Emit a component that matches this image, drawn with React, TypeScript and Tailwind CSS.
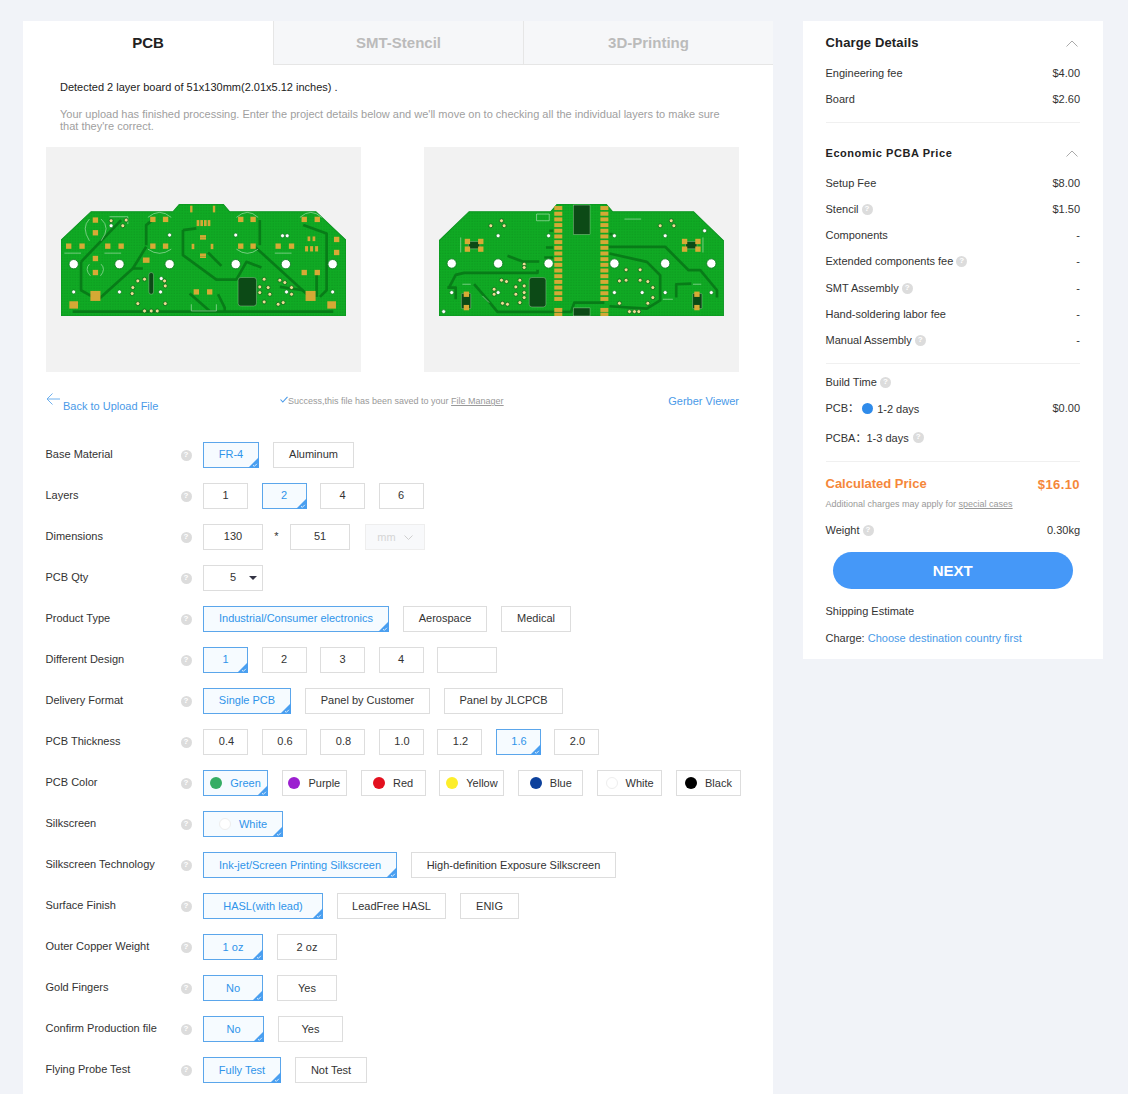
import React from "react";

type Opt = { t: string; w: string; on?: boolean; dot?: string; ring?: boolean };
type Row = { label: string; gap: string; lift?: boolean; opts: Opt[] };

const Help = ({ className = "" }: { className?: string }) => (
  <span className={"inline-flex h-[11px] w-[11px] shrink-0 items-center justify-center rounded-full bg-[#dcdcdc] text-[8px] font-bold leading-none text-white " + className}>?</span>
);

const Corner = () => (
  <svg className="absolute -bottom-px -right-px h-[11px] w-[11px]" viewBox="0 0 11 11">
    <path d="M11 0V11H0Z" fill="#4a9ff0" />
    <path d="M5 8.2l1.3 1.2 2.6-2.6" fill="none" stroke="#fff" strokeWidth="0.8" />
  </svg>
);

const Btn = ({ o, lift }: { o: Opt; lift?: boolean }) => (
  <div
    className={
      "relative flex h-[26px] shrink-0 items-center justify-center border " +
      o.w +
      (o.on ? " border-[#5ba6eb] bg-[#f6fbff] text-[#2f94ea]" : " border-[#dddddd] bg-white text-[#333]")
    }
  >
    {o.dot && (
      <span className={"mr-[8px] h-[12px] w-[12px] shrink-0 rounded-full " + o.dot + (o.ring ? " border border-[#eeeeee]" : "")} />
    )}
    <span className={"whitespace-nowrap" + (lift ? " -translate-y-px" : "")}>{o.t}</span>
    {o.on && <Corner />}
  </div>
);

const rowsTop: Row[] = [
  { label: "Base Material", gap: "gap-[14px]", lift: true, opts: [{ t: "FR-4", w: "w-[56px]", on: true }, { t: "Aluminum", w: "w-[81px]" }] },
  { label: "Layers", gap: "gap-[13.5px]", lift: true, opts: [{ t: "1", w: "w-[45px]" }, { t: "2", w: "w-[45px]", on: true }, { t: "4", w: "w-[45px]" }, { t: "6", w: "w-[45px]" }] },
];

const rowsBottom: Row[] = [
  { label: "Product Type", gap: "gap-[14px]", lift: true, opts: [{ t: "Industrial/Consumer electronics", w: "w-[186px]", on: true }, { t: "Aerospace", w: "w-[84px]" }, { t: "Medical", w: "w-[70px]" }] },
  { label: "Different Design", gap: "gap-[13.5px]", lift: true, opts: [{ t: "1", w: "w-[45px]", on: true }, { t: "2", w: "w-[45px]" }, { t: "3", w: "w-[45px]" }, { t: "4", w: "w-[45px]" }, { t: "", w: "w-[60px]" }] },
  { label: "Delivery Format", gap: "gap-[14px]", lift: true, opts: [{ t: "Single PCB", w: "w-[88px]", on: true }, { t: "Panel by Customer", w: "w-[125px]" }, { t: "Panel by JLCPCB", w: "w-[119px]" }] },
  { label: "PCB Thickness", gap: "gap-[13.5px]", lift: true, opts: ["0.4", "0.6", "0.8", "1.0", "1.2", "1.6", "2.0"].map((t) => ({ t, w: "w-[45px] pl-[2px]", on: t === "1.6" })) },
  {
    label: "PCB Color",
    gap: "gap-[13.83px]",
    opts: [
      { t: "Green", w: "w-[65px]", on: true, dot: "bg-[#35ad64]" },
      { t: "Purple", w: "w-[65px]", dot: "bg-[#9c1fd0]" },
      { t: "Red", w: "w-[65px]", dot: "bg-[#e3101e]" },
      { t: "Yellow", w: "w-[65px]", dot: "bg-[#fdee2a]" },
      { t: "Blue", w: "w-[65px]", dot: "bg-[#0c409c]" },
      { t: "White", w: "w-[65px]", dot: "bg-white", ring: true },
      { t: "Black", w: "w-[65px]", dot: "bg-black" },
    ],
  },
  { label: "Silkscreen", gap: "gap-[14px]", opts: [{ t: "White", w: "w-[80px]", on: true, dot: "bg-white", ring: true }] },
  { label: "Silkscreen Technology", gap: "gap-[14px]", opts: [{ t: "Ink-jet/Screen Printing Silkscreen", w: "w-[194px]", on: true }, { t: "High-definition Exposure Silkscreen", w: "w-[205px]" }] },
  { label: "Surface Finish", gap: "gap-[14px]", opts: [{ t: "HASL(with lead)", w: "w-[120px]", on: true }, { t: "LeadFree HASL", w: "w-[109px]" }, { t: "ENIG", w: "w-[59px]" }] },
  { label: "Outer Copper Weight", gap: "gap-[14px]", opts: [{ t: "1 oz", w: "w-[60px]", on: true }, { t: "2 oz", w: "w-[60px]" }] },
  { label: "Gold Fingers", gap: "gap-[14px]", opts: [{ t: "No", w: "w-[60px]", on: true }, { t: "Yes", w: "w-[60px]" }] },
  { label: "Confirm Production file", gap: "gap-[14px]", opts: [{ t: "No", w: "w-[61px]", on: true }, { t: "Yes", w: "w-[65px]" }] },
  { label: "Flying Probe Test", gap: "gap-[14px]", opts: [{ t: "Fully Test", w: "w-[78px]", on: true }, { t: "Not Test", w: "w-[72px]" }] },
];

const FormRow = ({ label, children }: { label: string; children: React.ReactNode }) => (
  <div className="flex h-[26px] items-center">
    <div className="w-[135px] shrink-0 -translate-y-px text-[#333]">{label}</div>
    <Help />
    <div className="ml-[11.5px] flex items-center">{children}</div>
  </div>
);

type Pt = [number, number];
type Rc = [number, number, number, number];

const Board = ({ id, outline, traces, pads, rects, holes, smallHoles, darks, silk, rings }: {
  id: string;
  outline: string;
  traces: string[];
  pads: Pt[];
  rects: Rc[];
  holes: Pt[];
  smallHoles: Pt[];
  darks: [number, number, number, number, number][];
  silk: string[];
  rings: Pt[];
}) => (
  <svg viewBox="0 0 853 335" className="h-[112px] w-[285px]">
    <defs>
      <pattern id={id} width="8" height="8" patternUnits="userSpaceOnUse">
        <rect width="8" height="8" fill="#10aa24" />
        <circle cx="3" cy="3" r="1.6" fill="#0b8f1c" />
      </pattern>
    </defs>
    <path d={outline} fill={`url(#${id})`} stroke="#0b9420" strokeWidth="3" />
    {traces.map((d, i) => (
      <path key={i} d={d} fill="none" stroke="#087c18" strokeWidth="8" strokeLinejoin="round" />
    ))}
    {silk.map((d, i) => (
      <path key={i} d={d} fill="none" stroke="#e4f6e4" strokeWidth="1.8" opacity="0.8" />
    ))}
    {darks.map(([x, y, w, h, r], i) => (
      <rect key={i} x={x} y={y} width={w} height={h} rx={r} fill="#0c4a16" stroke="#cfe8c8" strokeWidth="1" />
    ))}
    {rects.map(([x, y, w, h], i) => (
      <rect key={i} x={x - w / 2} y={y - h / 2} width={w} height={h} fill="#d4a935" />
    ))}
    {pads.map(([x, y], i) => (
      <rect key={i} x={x - 8} y={y - 8} width="16" height="16" fill="#d8aa35" />
    ))}
    {rings.map(([x, y], i) => (
      <circle key={i} cx={x} cy={y} r="6" fill="#ecdc92" stroke="#0a6a18" strokeWidth="2.5" />
    ))}
    {holes.map(([x, y], i) => (
      <circle key={i} cx={x} cy={y} r="14" fill="#ffffff" stroke="#0a7a1a" strokeWidth="2.5" />
    ))}
    {smallHoles.map(([x, y], i) => (
      <circle key={i} cx={x} cy={y} r="6" fill="#ffffff" stroke="#0a7a1a" strokeWidth="2" />
    ))}
  </svg>
);

const Board1 = () => (
  <Board
    id="p1"
    outline="M0 108L90 23H335L355 0H485L505 23H763L853 108V335H0Z"
    traces={[
      "M60 173L180 48",
      "M60 173V258L95 278",
      "M255 123V63L280 43",
      "M115 283L215 193H245",
      "M215 193L255 128",
      "M365 78V153L465 226H525L555 173L600 190",
      "M365 78L405 73",
      "M575 123L745 278",
      "M595 48V123",
      "M35 322H815",
      "M725 63L795 88V258L775 278",
      "M765 198V278",
      "M655 248L725 258",
      "M385 268L445 320",
      "M470 270L490 310V320",
      "M440 145L480 185",
    ]}
    pads={[
      [103, 48], [103, 86], [23, 126], [63, 126], [140, 126], [180, 126], [103, 163], [103, 205],
      [275, 46], [313, 46], [275, 126], [313, 126], [538, 46], [575, 46], [538, 126], [575, 126],
      [650, 126], [690, 126], [728, 46], [767, 46], [728, 205], [767, 205], [825, 106], [825, 145],
      [405, 263], [445, 263],
    ]}
    rects={[
      [390, 15, 7, 20], [458, 15, 7, 20], [410, 57, 8, 18], [421, 57, 8, 18], [432, 57, 8, 18], [443, 57, 8, 18],
      [425, 97, 18, 8], [425, 104, 18, 5], [425, 152, 18, 8], [425, 159, 18, 5], [395, 127, 8, 16], [452, 127, 8, 16],
      [742, 104, 8, 14], [757, 104, 8, 14], [735, 134, 9, 16], [750, 134, 9, 16], [765, 134, 9, 16],
      [103, 275, 30, 30], [747, 275, 30, 30], [38, 302, 26, 22], [810, 302, 26, 22], [255, 168, 20, 16],
    ]}
    holes={[[38, 180], [175, 180], [325, 180], [523, 180], [673, 180], [813, 180]]}
    smallHoles={[[38, 263], [175, 263], [325, 93], [523, 93], [298, 263], [300, 223], [677, 95], [675, 263], [813, 263], [150, 65], [663, 95]]}
    rings={[
      [150, 50], [195, 48], [185, 65], [250, 225], [230, 230], [215, 250], [213, 268], [310, 230], [312, 245],
      [230, 298], [312, 298], [250, 320], [270, 320], [288, 320], [608, 225], [595, 248], [595, 265], [620, 250],
      [625, 270], [655, 228], [670, 235], [608, 293], [650, 300], [665, 295], [690, 270], [690, 250],
    ]}
    darks={[[530, 220, 55, 85, 8], [263, 205, 14, 65, 7]]}
    silk={[
      "M85 45Q60 70 85 110",
      "M120 45Q150 70 120 110",
      "M260 40Q295 10 330 40",
      "M260 135Q295 160 330 135",
      "M525 40Q558 10 590 40",
      "M525 135Q558 160 590 135",
      "M715 40Q748 10 780 40",
      "M10 147H60",
      "M130 147H180",
      "M640 147H690",
      "M390 300V320H465V300",
      "M145 38H200V60",
      "M85 180Q70 195 88 215",
      "M120 180Q135 195 118 215",
    ]}
  />
);

const col: Rc[] = [];
for (let y = 12; y <= 285; y += 17) {
  col.push([357, y, 24, 12], [495, y, 24, 12]);
}

const Board2 = () => (
  <Board
    id="p2"
    outline="M0 110L90 23H334L354 0H500L520 23H762L852 110V335H0Z"
    traces={[
      "M205 155L250 172H300",
      "M30 250L50 212L75 206H295V197",
      "M105 240L140 280L175 323H342",
      "M507 128H677L747 198H782L832 258V280",
      "M510 148L622 173L662 213V288L622 313L510 306",
      "M25 250H50V285",
      "M710 280V240L755 238",
      "M342 323H395L405 295H495",
      "M342 80H330M342 130H320M342 160H315M510 90H520",
    ]}
    pads={[
      [85, 112], [125, 112], [85, 135], [125, 135], [735, 112], [775, 112], [735, 135], [775, 135],
      [82, 270], [82, 310], [772, 270], [772, 310],
    ]}
    rects={[...col, [357, 317, 24, 12], [357, 330, 24, 10], [495, 317, 24, 12], [495, 330, 24, 10]]}
    holes={[[38, 178], [177, 178], [328, 178], [525, 178], [677, 178], [815, 178]]}
    smallHoles={[[38, 265], [177, 95], [328, 95], [525, 95], [677, 95], [177, 265], [525, 265], [608, 265], [677, 265], [815, 265], [14, 322], [795, 80]]}
    rings={[
      [155, 65], [187, 50], [195, 65], [662, 65], [695, 50], [703, 65], [242, 228], [187, 228], [202, 232],
      [255, 245], [255, 265], [255, 280], [230, 248], [230, 270], [165, 255], [165, 270], [190, 297], [205, 300],
      [242, 295], [560, 197], [602, 197], [540, 230], [560, 228], [602, 228], [625, 232], [640, 250], [640, 280],
      [540, 297], [625, 297], [570, 322], [585, 322], [598, 322], [255, 180], [255, 190],
    ]}
    darks={[[402, 3, 50, 88, 0], [402, 311, 50, 24, 0], [270, 220, 50, 88, 8], [67, 268, 28, 45, 2], [759, 268, 28, 45, 2], [88, 112, 34, 22, 2], [738, 112, 34, 22, 2]]}
    silk={["M292 30H330V50H292Z", "M555 45H605", "M65 100V145", "M790 100V145", "M130 275L150 295", "M670 285H700", "M70 240H95", "M760 240H785"]}
  />
);

const Chevron = () => (
  <svg className="mr-[2px] h-[7px] w-[12px]" viewBox="0 0 12 7" fill="none" stroke="#aaaaaa" strokeWidth="1">
    <path d="M0.5 6.5L6 1L11.5 6.5" />
  </svg>
);

const SideRow = ({ l, r, help, className = "" }: { l: React.ReactNode; r?: string; help?: boolean; className?: string }) => (
  <div className={"flex h-[26px] items-center justify-between " + className}>
    <div className="flex items-center">
      <span className="whitespace-nowrap">{l}</span>
      {help && <Help className="ml-[3px]" />}
    </div>
    {r && <span>{r}</span>}
  </div>
);

export default function App() {
  return (
    <div className="flex h-[1094px] gap-[30px] overflow-hidden bg-[#f1f3f8] pl-[23px] pt-[21px] font-['Liberation_Sans','Noto_Sans_CJK_SC',Arial,sans-serif] text-[11px] leading-[12px] text-[#333]">
      <main className="h-[1200px] w-[750px] shrink-0 bg-white">
        <div className="flex h-[44px]">
          <div className="flex w-[250px] items-center justify-center text-[15px] font-bold text-[#222]">PCB</div>
          <div className="flex w-[250px] items-center justify-center border-b border-l border-[#e6e6e6] bg-[#f6f7f9] text-[15px] font-bold text-[#bbbbbb]">SMT-Stencil</div>
          <div className="flex w-[250px] items-center justify-center border-b border-l border-[#e6e6e6] bg-[#f6f7f9] text-[15px] font-bold text-[#bbbbbb]">3D-Printing</div>
        </div>

        <div className="px-[37px] pt-[16px]">
          <p className="text-[#222]">Detected 2 layer board of 51x130mm(2.01x5.12 inches) .</p>
          <p className="mt-[15px] text-[#a0a0a0]">
            Your upload has finished processing. Enter the project details below and we'll move on to checking all the individual layers to make sure
            <br />
            that they're correct.
          </p>
        </div>

        <div className="mt-[15px] flex gap-[63px] pl-[23px]">
          <div className="flex h-[225px] w-[315px] items-center justify-center bg-[#f2f2f2]"><Board1 /></div>
          <div className="flex h-[225px] w-[315px] items-center justify-center bg-[#f2f2f2]"><Board2 /></div>
        </div>

        <div className="mt-[21px] flex h-[20px] items-start pl-[23px] pr-[34px]">
          <div className="flex w-[234px] items-start text-[#4a9ae8]">
            <svg className="mr-[3px] h-[12px] w-[14px]" viewBox="0 0 14 12" fill="none" stroke="#6fb0ee" strokeWidth="1">
              <path d="M14 6H1M6.5 0.5L1 6L6.5 11.5" />
            </svg>
            <span className="mt-[7px]">Back to Upload File</span>
          </div>
          <div className="mt-[2px] flex flex-1 items-start text-[9px] text-[#999]">
            <svg className="mt-[1px] h-[7px] w-[8px]" viewBox="0 0 8 7" fill="none" stroke="#4a9ae8" strokeWidth="1.1">
              <path d="M0.5 3.5L2.8 6L7.5 0.8" />
            </svg>
            <span>Success,this file has been saved to your <span className="underline">File Manager</span></span>
          </div>
          <span className="mt-[2px] text-[#4a9ae8]">Gerber Viewer</span>
        </div>

        <div className="mt-[29px] flex flex-col gap-[15px] pl-[22.5px]">
          {rowsTop.map((r) => (
            <FormRow key={r.label} label={r.label}>
              <div className={"flex " + r.gap}>{r.opts.map((o) => <Btn key={o.t} o={o} lift={r.lift} />)}</div>
            </FormRow>
          ))}
          <FormRow label="Dimensions">
            <div className="flex h-[26px] w-[60px] items-center justify-center border border-[#dddddd]"><span className="-translate-y-px">130</span></div>
            <span className="w-[27px] -translate-y-px text-center">*</span>
            <div className="flex h-[26px] w-[60px] items-center justify-center border border-[#dddddd]"><span className="-translate-y-px">51</span></div>
            <div className="ml-[15px] flex h-[26px] w-[60px] items-center justify-center gap-[8px] border border-[#eeeeee] bg-[#f8f9fb] text-[#d5d5d5]">
              mm
              <svg className="h-[5px] w-[9px]" viewBox="0 0 9 5" fill="none" stroke="#cfcfcf"><path d="M0.5 0.5L4.5 4.5L8.5 0.5" /></svg>
            </div>
          </FormRow>
          <FormRow label="PCB Qty">
            <div className="relative flex h-[26px] w-[60px] items-center justify-center border border-[#dddddd]">
              <span className="-translate-y-px">5</span>
              <svg className="absolute right-[5px] top-[10px] h-[4px] w-[8px]" viewBox="0 0 8 4"><path d="M0 0H8L4 4Z" fill="#333344" /></svg>
            </div>
          </FormRow>
          {rowsBottom.map((r) => (
            <FormRow key={r.label} label={r.label}>
              <div className={"flex " + r.gap}>{r.opts.map((o, i) => <Btn key={i} o={o} lift={r.lift} />)}</div>
            </FormRow>
          ))}
        </div>
      </main>

      <aside className="h-[638px] w-[300px] shrink-0 bg-white pl-[22.5px] pr-[23px] pt-[9px]">
        <div className="flex h-[26px] items-center justify-between">
          <span className="text-[13px] font-bold tracking-[0.15px] text-[#222]">Charge Details</span>
          <Chevron />
        </div>
        <div className="mt-[4px]">
          <SideRow l="Engineering fee" r="$4.00" />
          <SideRow l="Board" r="$2.60" />
        </div>
        <div className="mt-[10px] border-t border-[#f0f0f0]" />
        <div className="mt-[17px] flex h-[26px] items-center justify-between">
          <span className="text-[11px] font-bold tracking-[0.55px] text-[#222]">Economic PCBA Price</span>
          <Chevron />
        </div>
        <div className="mt-[4px]">
          <SideRow l="Setup Fee" r="$8.00" />
          <SideRow l="Stencil" r="$1.50" help />
          <SideRow l="Components" r="-" />
          <SideRow l="Extended components fee" r="-" help />
          <SideRow l="SMT Assembly" r="-" help className="mt-px" />
          <SideRow l="Hand-soldering labor fee" r="-" />
          <SideRow l="Manual Assembly" r="-" help />
        </div>
        <div className="mt-[10px] border-t border-[#f0f0f0]" />
        <div className="mt-[5px]">
          <SideRow l="Build Time" help />
          <div className="flex h-[26px] items-center justify-between">
            <div className="flex items-center">
              <span>PCB：</span>
              <span className="ml-[3px] mr-[4px] h-[11px] w-[11px] rounded-full bg-[#2f8bea]" />
              <span className="translate-y-px">1-2 days</span>
            </div>
            <span>$0.00</span>
          </div>
          <div className="mt-[4px] flex h-[26px] items-center">
            <span>PCBA：1-3 days</span>
            <Help className="ml-[4px] -translate-y-px" />
          </div>
        </div>
        <div className="mt-[10px] border-t border-[#f0f0f0]" />
        <div className="mt-[9px] flex h-[26px] items-center justify-between font-bold text-[#f5873a]">
          <span className="text-[13px]">Calculated Price</span>
          <span className="translate-y-px text-[13px] tracking-[0.4px]">$16.10</span>
        </div>
        <div className="flex h-[14px] items-center text-[9px] text-[#999]">
          Additional charges may apply for&nbsp;<span className="underline">special cases</span>
        </div>
        <SideRow l="Weight" r="0.30kg" help className="mt-[6px]" />
        <div className="mx-[7px] mt-[9px] flex h-[37px] items-center justify-center rounded-full bg-[#4598f8] text-[15px] font-bold text-white">NEXT</div>
        <div className="mt-[9px] flex h-[26px] items-center">Shipping Estimate</div>
        <div className="mt-px flex h-[26px] items-center">
          Charge:&nbsp;<span className="text-[#4a9ae8]">Choose destination country first</span>
        </div>
      </aside>
    </div>
  );
}
